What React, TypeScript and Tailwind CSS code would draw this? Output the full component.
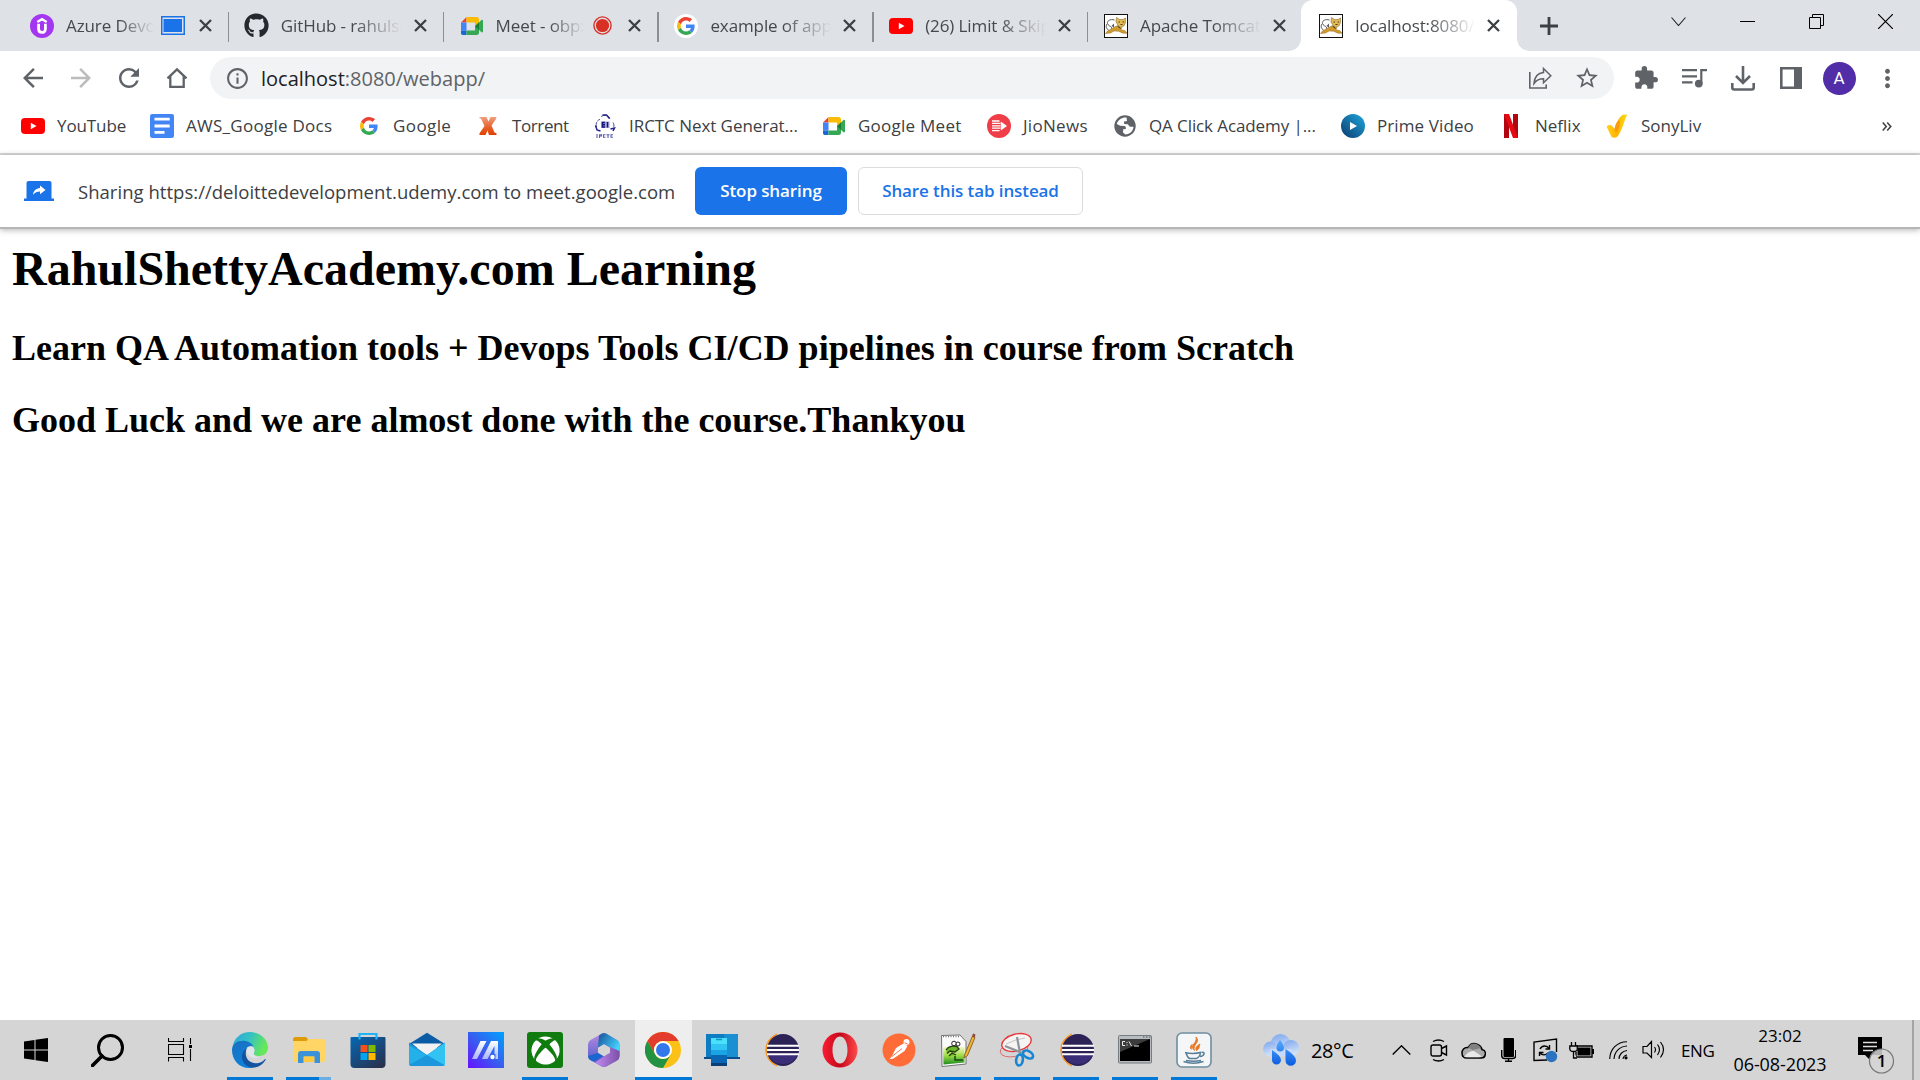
import React from "react";
import { MdArrowBack, MdArrowForward, MdRefresh, MdInfoOutline, MdStarBorder, MdExtension, MdMoreVert } from "react-icons/md";
import { FaXbox, FaGithub } from "react-icons/fa";

/* ---------- favicons (24px box) ---------- */

const GoogleG = ({ s = 18 }: { s?: number }) => (
  <svg width={s} height={s} viewBox="0 0 48 48">
    <path fill="#EA4335" d="M24 9.5c3.54 0 6.71 1.22 9.21 3.6l6.85-6.85C35.9 2.38 30.47 0 24 0 14.62 0 6.51 5.38 2.56 13.22l7.98 6.19C12.43 13.72 17.74 9.5 24 9.5z" />
    <path fill="#4285F4" d="M46.98 24.55c0-1.57-.15-3.09-.38-4.55H24v9.02h12.94c-.58 2.96-2.26 5.48-4.78 7.18l7.73 6c4.51-4.18 7.09-10.36 7.09-17.65z" />
    <path fill="#FBBC05" d="M10.53 28.59c-.48-1.45-.76-2.99-.76-4.59s.27-3.14.76-4.59l-7.98-6.19C.92 16.46 0 20.12 0 24c0 3.88.92 7.54 2.56 10.78l7.97-6.19z" />
    <path fill="#34A853" d="M24 48c6.48 0 11.93-2.13 15.89-5.81l-7.73-6c-2.15 1.45-4.92 2.3-8.16 2.3-6.26 0-11.57-4.22-13.47-9.91l-7.98 6.19C6.51 42.62 14.62 48 24 48z" />
  </svg>
);

const Udemy = () => (
  <svg width="24" height="24" viewBox="0 0 24 24">
    <circle cx="12" cy="12" r="12" fill="#a435f0" />
    <path d="M7.3 8 12 5.200l4.700 2.800" fill="none" stroke="#fff" strokeWidth="2.400" />
    <path d="M8.600 9.800v5.200c0 4.600 6.800 4.600 6.800 0V9.800" fill="none" stroke="#fff" strokeWidth="2.800" />
  </svg>
);

const Meet = () => (
  <svg width="24" height="24" viewBox="0 0 24 24">
    <path fill="#ea4335" d="M1 8.5 6.5 3v5.5z" />
    <path fill="#fbbc04" d="M6.5 3h10A2.5 2.5 0 0 1 19 5.500V9l-4 3.500V8.500H6.500z" />
    <path fill="#4285f4" d="M1 8.500h5.500v8H1z" />
    <path fill="#1967d2" d="M1 16.500h5.500V21H2.800A1.800 1.800 0 0 1 1 19.200z" />
    <path fill="#34a853" d="M6.500 16.500H15V12l4 3v3.500A2.500 2.500 0 0 1 16.500 21h-10z" />
    <path fill="#34a853" d="M15 12.200 21.500 6c.6-.5 1.500-.2 1.500.6v11c0 .8-.9 1.100-1.500.6z" />
    <path fill="#188038" d="M15 12.200 19 8.400v7.400z" />
  </svg>
);

const YouTube = () => (
  <svg width="24" height="24" viewBox="0 0 24 24">
    <rect x="0" y="4" width="24" height="16" rx="4" fill="#f00" />
    <path d="M9.800 8.800v6.400l5.700-3.200z" fill="#fff" />
  </svg>
);

const Tomcat = () => (
  <svg width="24" height="24" viewBox="0 0 24 24">
    <rect x=".5" y=".5" width="23" height="23" fill="#fff" stroke="#111" />
    <path d="M12.500 12 8 14.500 3.500 17 1.500 19.500l5-.5 3.500-2 4.500.2 4.500 2H23l-2-2.500-4-1 .5-2-3.500-1.500z" fill="#d19a2c" stroke="#8d6a25" strokeWidth=".5" />
    <path d="m12.500 3.500 3 2h3.500l2.500-1.500-.2 5-1.500 3-2.800 1.500-2.800-2L12 8z" fill="#e3bb57" stroke="#84682f" strokeWidth=".6" />
    <path d="M14.500 8H16M18.500 8H20M16.500 10.500h2M13.500 12l3 2.500" stroke="#3b2a0a" strokeWidth=".9" />
    <path d="M10.500 6C5 4.500 2 8 4 10.500S8 12 7.500 14.500M3 10c-1.500 2.500-1 4.500 1.500 6" fill="none" stroke="#444" strokeWidth=".9" />
    <path d="m7.500 12 2.500-2.500v4z" fill="#555" />
  </svg>
);

const Docs = () => (
  <svg width="24" height="24" viewBox="0 0 24 24">
    <rect width="24" height="24" rx="2.200" fill="#4285f4" />
    <path d="M4.500 5.200h15.200M4.500 12h15.200M4.500 18.300h10" stroke="#fff" strokeWidth="2.800" />
  </svg>
);

const Torrent = () => (
  <svg width="24" height="24" viewBox="0 0 24 24">
    <defs>
      <linearGradient id="tor" x2="0" y2="1"><stop stopColor="#f0a080" /><stop offset=".55" stopColor="#e8622c" /><stop offset="1" stopColor="#e04000" /></linearGradient>
    </defs>
    <path d="M3.500 3h7l2 4.500L14.500 3H20.500l-.5 2-4.500 6.500L18.500 18.500l2 .8V21h-7.500l-1.500-4.500L9.500 21H3.500v-1.700L8.500 12 5 4.500l-1.500-.3z" fill="url(#tor)" />
  </svg>
);

const Irctc = () => (
  <svg width="24" height="24" viewBox="0 0 24 24">
    <path d="M8 2.500C13 0 16.500 2 16.800 5M3.500 13C2.500 9 4 6.500 7 5.300M20 8.500c1.500 2.500 1.200 4.500-.5 6.500" fill="none" stroke="#23238e" strokeWidth=".8" strokeDasharray="5 1" />
    <path d="M2.500 11.500 4 16l3.500 1M17.500 15l4-1-1.500 3M9.500 1h4l3 3.500" fill="none" stroke="#23238e" strokeWidth="1.500" />
    <rect x="8" y="7.500" width="8.500" height="6.500" fill="#a3a3d4" />
    <path d="M12 8.500H9.500v4.500H12M9.500 10.700H12M14.500 8v5.500" stroke="#15157e" strokeWidth="1.400" fill="none" />
    <path d="M4 20v4M6.500 24v-3.300h2V22H7M12.500 20.700h-2v2.600h2M13.500 20.700h3M15 20.700V24M20 20.700h-2v2.600h2" fill="none" stroke="#5c5cae" strokeWidth="1.100" />
  </svg>
);

const Jio = () => (
  <svg width="24" height="24" viewBox="0 0 24 24">
    <circle cx="12" cy="12" r="12" fill="#f03e48" />
    <path d="M5 7h7.500M5 9.400h8.500M5 11.800h8.500M5 14.200h8.500M5 16.600h7.500" stroke="#fff" strokeWidth="1.300" />
    <path d="M13.800 7.500v9L20 12z" fill="#fff" />
  </svg>
);

const Globe = () => (
  <svg width="24" height="24" viewBox="0 0 24 24">
    <circle cx="12" cy="12" r="10.700" fill="#5f6368" />
    <path d="M13.500 3.600C9 3.300 5 5.800 3.800 10l3.400 1.700 4.300.3c1.300.3 1.500 1.500 1.300 3l-2.600.3-.2 3.300 2.400 1.900C17 20.200 20.200 17 20.500 12.700L17 12.800l-2.300-2.600-3.500-.3-.2-2.300 3-.5z" fill="#fff" />
  </svg>
);

const Prime = () => (
  <svg width="24" height="24" viewBox="0 0 24 24">
    <defs><linearGradient id="prm" x1="1" x2="0" y2="1"><stop stopColor="#1fa8dc" /><stop offset="1" stopColor="#0b3a6e" /></linearGradient></defs>
    <circle cx="12" cy="12" r="12" fill="url(#prm)" />
    <path d="M9 8v8l7-4z" fill="#fff" />
  </svg>
);

const Netflix = () => (
  <svg width="24" height="24" viewBox="0 0 24 24">
    <path d="M5 0h5v24H5zM14 0h5v24h-5z" fill="#b1060f" />
    <path d="M5 0h5l9 24h-5z" fill="#e50914" />
  </svg>
);

const Sony = () => (
  <svg width="24" height="24" viewBox="0 0 24 24">
    <defs><linearGradient id="sny" x2="1"><stop stopColor="#ffd21f" /><stop offset=".5" stopColor="#ffb300" /><stop offset="1" stopColor="#f7e017" /></linearGradient></defs>
    <path d="M1.500 12.500c2-1.500 4-1.800 5.500-.8l2.500 3.300C11 9 14 3 18 .8L22.300.5C19.500 6 17 17 12.500 22.500c-2 1.500-4 1.500-6 .5z" fill="url(#sny)" />
    <path d="M9.500 15c1-4.500 3-8.500 4.500-8.500s1 5-1 9.500-3 2-3.500-1z" fill="#f99b0c" />
  </svg>
);

/* ---------- tab strip ---------- */

const Sharing = () => (
  <svg width="24" height="19" viewBox="0 0 24 19">
    <rect x=".75" y=".75" width="22.500" height="17.500" fill="none" stroke="#1a73e8" strokeWidth="1.500" />
    <rect x="2.500" y="3" width="18.500" height="13" fill="#1a73e8" />
  </svg>
);
const Recording = () => (
  <svg width="19" height="19" viewBox="0 0 19 19">
    <circle cx="9.500" cy="9.500" r="8.600" fill="none" stroke="#d93025" strokeWidth="1.400" />
    <circle cx="9.500" cy="9.500" r="6.600" fill="#d93025" />
  </svg>
);

type TabData = { title: string; icon: React.ReactNode; badge?: React.ReactNode; active?: boolean };
const tabs: TabData[] = [
  { title: "Azure Devops", icon: <Udemy />, badge: <Sharing /> },
  { title: "GitHub - rahulshe", icon: <FaGithub size={25} color="#24292f" className="shrink-0" /> },
  { title: "Meet - obpx", icon: <Meet />, badge: <Recording /> },
  { title: "example of applic", icon: <span className="flex size-6 items-center justify-center rounded-full bg-white"><GoogleG /></span> },
  { title: "(26) Limit & Skip in", icon: <YouTube /> },
  { title: "Apache Tomcat/", icon: <Tomcat /> },
  { title: "localhost:8080/w", icon: <Tomcat />, active: true },
];

const Tab = ({ t, sep }: { t: TabData; sep: boolean }) => (
  <div className={"relative flex h-[51px] shrink-0 items-center " + (t.active ? "-ml-[2px] w-[216px] rounded-t-xl bg-white pl-[18px]" : "w-[214.8px] pl-[15.5px]")}>
    {t.active && (
      <>
        <span className="absolute bottom-0 -left-3 size-3 bg-[radial-gradient(circle_at_0_0,#dee1e6_11.5px,white_12px)]" />
        <span className="absolute bottom-0 -right-3 size-3 bg-[radial-gradient(circle_at_100%_0,#dee1e6_11.5px,white_12px)]" />
      </>
    )}
    <span className="flex size-6 shrink-0 items-center justify-center">{t.icon}</span>
    <span className={"ml-3 overflow-hidden whitespace-nowrap text-[17px] tracking-[-0.1px] leading-6 text-[#45494d] mask-r-from-60% mask-r-to-100% " + (t.badge ? "w-[88px]" : "w-[121px]")}>{t.title}</span>
    {t.badge && <span className="ml-[7px] flex w-6 shrink-0 justify-center">{t.badge}</span>}
    <svg className="absolute right-[17.5px] top-[19px]" width="13" height="13" viewBox="0 0 13 13"><path d="m1 1 11 11M12 1 1 12" stroke="#3c4043" strokeWidth="2.300" /></svg>
    {sep && <span className="absolute right-0 top-3 h-[30px] w-[1.500px] bg-[#8c8f94]" />}
  </div>
);

/* ---------- bookmarks ---------- */

const bookmarks: { n: string; w: string; icon: React.ReactNode }[] = [
  { n: "YouTube", w: "w-[129px] tracking-[-0.1px]", icon: <YouTube /> },
  { n: "AWS_Google Docs", w: "w-[207px] tracking-[0.27px]", icon: <Docs /> },
  { n: "Google", w: "w-[119px] tracking-[0.4px]", icon: <GoogleG /> },
  { n: "Torrent", w: "w-[117px] tracking-[-0.4px]", icon: <Torrent /> },
  { n: "IRCTC Next Generat...", w: "w-[229px] tracking-[-0.05px]", icon: <Irctc /> },
  { n: "Google Meet", w: "w-[165px] tracking-[0.25px]", icon: <Meet /> },
  { n: "JioNews", w: "w-[126px] tracking-[0.3px]", icon: <Jio /> },
  { n: "QA Click Academy |...", w: "w-[228px] tracking-[-0.1px]", icon: <Globe /> },
  { n: "Prime Video", w: "w-[158px] tracking-[0.1px]", icon: <Prime /> },
  { n: "Neflix", w: "w-[106px]", icon: <Netflix /> },
  { n: "SonyLiv", w: "w-[110px]", icon: <Sony /> },
];

/* ---------- taskbar app icons (36px box) ---------- */

const S = ({ children }: { children: React.ReactNode }) => <svg width="36" height="36" viewBox="0 0 36 36">{children}</svg>;

const Edge = () => (
  <S>
    <defs>
      <linearGradient id="e1" x1="0" x2="1" y2=".3"><stop stopColor="#2aa5dc" /><stop offset=".5" stopColor="#35c1c5" /><stop offset="1" stopColor="#66e858" /></linearGradient>
      <linearGradient id="e2" x1="0" x2=".6" y1="0" y2="1"><stop stopColor="#1b6fbf" /><stop offset="1" stopColor="#0a84dd" /></linearGradient>
    </defs>
    <path d="M.5 15C2 6 9 0 18 0c10 0 18 7 18 15.500 0 5-4 8.500-8.500 8.500-4 0-6-1.500-5.500-3 1-2 .8-5-1.500-6.700C14 9 4 9 .5 15z" fill="url(#e1)" />
    <path d="M0 18C0 12 5.500 8.800 11 8.800c5 0 9 2.700 10.500 5.800-4-2-8.500 1-8.500 6.500 0 7 5 12 13 11.500-2.500 2.300-5.500 3.400-9 3.400C7 36 0 28 0 18z" fill="url(#e2)" />
    <path d="M15.500 15.800c-3 4-2.500 11.500 4 14.500 5 2 10 1 13.500-3.300 1-.3.800.6.3 1.300C31 32.500 26 36 19.500 35.800 12.500 34 9.500 28.500 10 24c.3-3.500 2.500-6.800 5.500-8.200z" fill="#1353a0" />
    <path d="M14.500 18c.3-3 5.500-4.800 7.500-1.500 1 2-.5 4-.3 5.500.3 1.800 2.300 3 5.300 3.200-5 2-13-1-12.500-7.200z" fill="#dfe6ea" />
  </S>
);
const Explorer = () => (
  <S>
    <path d="M2 7.500Q2 5 4 5h11l2 2.500v6H2z" fill="#dd9c05" />
    <path d="M2 9h13.500l2-2H32q2 0 2 2v19q0 2-2 2H4q-2 0-2-2z" fill="#ffd665" />
    <path d="M7 30V22q0-3 3-3h16q3 0 3 3v9h-5.500v-6.500h-11V31H7z" fill="#3b92d8" />
    <path d="M13 24.500h10V30H13z" fill="#ffc93f" />
  </S>
);
const Store = () => (
  <S>
    <defs><linearGradient id="st" x2=".8" y2="1"><stop stopColor="#0468b5" /><stop offset="1" stopColor="#283250" /></linearGradient></defs>
    <path d="M.5 6q0-1 1-1h33q1 0 1 1v26q0 4-4 4h-27q-4 0-4-4z" fill="url(#st)" />
    <path d="M9.500 7.500V2h17v5.500" fill="none" stroke="#22b3f5" strokeWidth="2.200" />
    <path d="M10.500 13h7v7h-7z" fill="#f25022" /><path d="M18.500 13h7v7h-7z" fill="#7fba00" />
    <path d="M10.500 21h7v7h-7z" fill="#00a4ef" /><path d="M18.500 21h7v7h-7z" fill="#ffb900" />
  </S>
);
const Mail = () => (
  <S>
    <path d="M0 12 18 .800 36 12v4H0z" fill="#0b5ca5" />
    <path d="M3 11.500h30L18 24z" fill="#f2f2f2" />
    <path d="M0 10.500 18 23 36 10.500V32q0 2-2 2H2q-2 0-2-2z" fill="#1c96dc" />
    <path d="M36 10.500 18 23l18 10.500z" fill="#32c3f3" />
    <path d="M0 10.500v3L18 23 0 33z" fill="#24b0e8" />
  </S>
);
const MyAsus = () => (
  <S>
    <defs>
      <linearGradient id="ma" x1="1" x2="0" y2="1"><stop stopColor="#00a2ff" /><stop offset=".5" stopColor="#3660ef" /><stop offset="1" stopColor="#6810ff" /></linearGradient>
      <linearGradient id="mb" x2="0" y2="1"><stop stopColor="#fff" /><stop offset="1" stopColor="#a9b8fa" /></linearGradient>
    </defs>
    <path d="M0 0h36v36H0z" fill="url(#ma)" />
    <path d="M12.500 9h6L9 27H4zM23 9h7v13h-3.500v-8l-7 13h-5.500z" fill="url(#mb)" />
    <circle cx="24.500" cy="25" r="2.200" fill="#fff" /><path d="M27.500 22H30v5h-2.500z" fill="#b8c8fb" />
  </S>
);
const Xbox = () => <span className="flex size-9 items-center justify-center rounded-[3px] bg-[#107c10]"><FaXbox size={29} color="#fff" /></span>;
const M365 = () => (
  <S>
    <defs>
      <linearGradient id="o1" x2="0" y2="1"><stop stopColor="#b98be0" /><stop offset="1" stopColor="#3f55c8" /></linearGradient>
      <linearGradient id="o2" x2="1" y2=".6"><stop stopColor="#174f9a" /><stop offset="1" stopColor="#45d2fb" /></linearGradient>
      <linearGradient id="o3" x2="1"><stop stopColor="#c58af2" /><stop offset="1" stopColor="#7a50a8" /></linearGradient>
    </defs>
    <path fillRule="evenodd" d="M16 1.500q2-1 4 0l11 6.500q2.500 1.500 2.500 4v12q0 3-2.500 4.500l-11 6q-2 1-4 0L5 28.500Q2 27 2 24V12.500q0-3 2.500-4.500zM18 12l-6 3.500v5.500l6 3.500 6-3.500v-5.500z" fill="url(#o1)" />
    <path d="M13 3.500 16 1.500q2-1 4 0l11 6.500q2.500 1.500 2.500 4V20L24 21v-5.500L18 12l-6 3.500z" fill="url(#o2)" />
    <path d="M33.500 19v5q0 3-2.500 4.500l-11 6q-2 1-4 0l-7-4 9-6 6-3.500V15z" fill="url(#o3)" />
    <path d="M2 24q1 4.500 5 5l3.500-1L17 24l-5-3z" fill="#1a66cf" />
  </S>
);
const Chrome = () => (
  <S>
    <circle cx="18" cy="18" r="18" fill="#fbc116" />
    <path d="M2.400 9A18 18 0 0 1 33.600 9H18a9 9 0 0 0-7.800 13.500z" fill="#e33b2e" />
    <path d="M2.400 9A18 18 0 0 0 18 36l7.800-13.500a9 9 0 0 1-15.600 0z" fill="#229342" />
    <circle cx="18" cy="18" r="9" fill="#fff" /><circle cx="18" cy="18" r="7" fill="#3378ea" />
  </S>
);
const Phone = () => (
  <S>
    <path d="M2 2h32v24H2z" fill="#0e7cc0" /><path d="M20 2h12q2 0 2 2v21H23z" fill="#1a8fd2" />
    <path d="M0 25h36v2H0z" fill="#0a4f8c" />
    <path d="M7 6h16v28H7z" fill="#0a65b2" /><path d="M7 6h16v17H7z" fill="#1ba4e4" /><path d="M7 6h16v6H7z" fill="#48e0fa" /><path d="M7 12h16v6H7z" fill="#31c3f2" />
    <path d="M12 7.500h6" stroke="#1291c7" strokeWidth="1.500" /><path d="M7 31h16v3H7z" fill="#0b3f7a" />
  </S>
);
const Eclipse = () => (
  <S>
    <path d="M14 2A17 17 0 0 0 14 34C3 26 3 10 14 2z" fill="#f7941e" stroke="#f7941e" />
    <circle cx="20" cy="18" r="16" fill="#2c2255" />
    <path d="M5 22h30q-4 10-15 10T5 22z" fill="#3b2e78" />
    <path d="M4 13.700h32M4 18h32M4 22.300h32" stroke="#fff" strokeWidth="1.900" />
  </S>
);
const Opera = () => (
  <S>
    <defs><linearGradient id="op" x2="1"><stop stopColor="#fa1e32" /><stop offset=".5" stopColor="#c5071c" /><stop offset="1" stopColor="#ff4b4b" /></linearGradient></defs>
    <path fillRule="evenodd" d="M18 .500a17.500 17.500 0 1 0 0 35 17.500 17.500 0 1 0 0-35zM18 4.500c4.500 0 7.500 6 7.500 13.500S22.500 31.500 18 31.500 10.500 25.500 10.500 18 13.500 4.500 18 4.500z" fill="url(#op)" />
  </S>
);
const Postman = () => (
  <S>
    <circle cx="18" cy="18" r="16.500" fill="#ff6c37" />
    <circle cx="25.500" cy="10" r="3" fill="#fff" />
    <path d="m22.500 11.500 4 2.500-3 5-11 7.500-4 .8 2.500-3.300 4-8z" fill="#fff" />
    <path d="m11 24.500 10-8M23.500 10.800l3 1" stroke="#ff6c37" strokeWidth=".9" />
  </S>
);
const Notepad = () => (
  <S>
    <defs><linearGradient id="np" x2="0" y2="1"><stop stopColor="#f4f8c8" /><stop offset=".5" stopColor="#9bdb45" /><stop offset="1" stopColor="#1c8b20" /></linearGradient></defs>
    <path d="M1.500 3.500 20 3l6 6.500V32L2 34.500z" fill="#fafafa" stroke="#555" strokeWidth=".8" />
    <path d="M3 15h21.500v15.500L3.500 32.500z" fill="url(#np)" />
    <path d="M3 4.500h16" stroke="#777" strokeDasharray="1 1.500" strokeWidth="1.500" />
    <path d="M6 18c2-3 6-4.500 11-3.500l2 2.500-4 3-5-1-3 2.500M9 24l3-3 4 2" stroke="#253f10" strokeWidth="1.300" fill="#6bb82b" />
    <circle cx="14" cy="11.500" r="2.300" fill="#fff" stroke="#222" /><circle cx="18" cy="12" r="2" fill="#fff" stroke="#222" />
    <path d="M15 24v4h8" stroke="#134b12" strokeWidth="1.500" fill="none" />
    <path d="m24.500 23 8-19 2.500 1.500-7.500 18-3.500 2.500z" fill="#f5b52a" stroke="#754f1d" strokeWidth=".8" />
    <path d="m32 4.500 1-3 2.500 1-.8 3.300z" fill="#8e4a3c" />
  </S>
);
const Snip = () => (
  <S>
    <ellipse cx="15" cy="17.500" rx="14" ry="7" transform="rotate(-12 15 17.500)" fill="none" stroke="#e05a5a" strokeWidth=".8" />
    <ellipse cx="17.500" cy="10.500" rx="15" ry="8.500" transform="rotate(-14 17.500 10.500)" fill="#f6f3f3" stroke="#e8383b" strokeWidth="1.400" />
    <path d="M7 12q10-5 19-6" stroke="#c3c3c3" fill="none" />
    <path d="m18 5 3 16 1.500-1M6 14l16 6.500" stroke="#8e969c" strokeWidth="2.200" fill="none" />
    <ellipse cx="20.500" cy="28" rx="3.300" ry="5.500" transform="rotate(8 20.500 28)" fill="none" stroke="#1586d4" strokeWidth="2.600" />
    <ellipse cx="29" cy="22.500" rx="5.500" ry="3.300" transform="rotate(30 29 22.500)" fill="none" stroke="#1586d4" strokeWidth="2.600" />
  </S>
);
const Cmd = () => (
  <S>
    <rect x="1.500" y="3.500" width="33" height="27.500" rx="1" fill="#b8bcc0" stroke="#777c80" />
    <path d="M3 7h30v22H3z" fill="#000" /><path d="M3 7h30L3 20z" fill="#3c3c3c" />
    <path d="M8 9.500H5.500v4H8M10 10v1M10 12.500v1M12 9.500l2.500 4.500M17 14h5" stroke="#eee" fill="none" />
    <path d="M26 5h1.500M29 5h1.500M32 5h1.500" stroke="#456" strokeWidth="1.200" />
  </S>
);
const Java = () => (
  <S>
    <rect x="1" y="1" width="34" height="34" rx="5" fill="#f5f6f7" stroke="#6f8da0" strokeWidth="1.600" />
    <path d="M18.500 18.500c-6-5 3.500-7.500 1.500-13.500 5 5.500-4 7.500-1.500 13.500zM20.500 18.500c-2-3 1-5 3.500-6.500-1.500 3 .5 4-3.500 6.500zM15.500 17.500c-2.500-2-.5-4 1-5.500" fill="#e87722" stroke="#e87722" strokeWidth=".9" />
    <path d="M9 20.500q8 2 16.500-.2M10 20.500q1 4.500 3.500 6h7q3.500-1.500 4-6M26 20.500c3.500-1 2.500 3.500-2 4M7.500 29.500q10 3.500 20 0M10 28.500q8 1.500 15 0" fill="none" stroke="#5a8099" strokeWidth="1.500" />
  </S>
);

const apps: { icon: React.ReactNode; on?: boolean; active?: boolean; stacked?: boolean }[] = [
  { icon: <Edge />, on: true }, { icon: <Explorer />, on: true, stacked: true }, { icon: <Store /> }, { icon: <Mail /> }, { icon: <MyAsus /> },
  { icon: <Xbox />, on: true }, { icon: <M365 /> }, { icon: <Chrome />, active: true }, { icon: <Phone /> }, { icon: <Eclipse /> }, { icon: <Opera /> },
  { icon: <Postman /> }, { icon: <Notepad />, on: true }, { icon: <Snip />, on: true }, { icon: <Eclipse />, on: true }, { icon: <Cmd />, on: true }, { icon: <Java />, on: true },
];

const Weather = () => (
  <svg width="36" height="34" viewBox="0 0 36 34">
    <defs>
      <linearGradient id="cl" x2=".3" y2="1"><stop stopColor="#7ba6ec" /><stop offset="1" stopColor="#d5e3f9" /></linearGradient>
      <linearGradient id="dr" x2="0" y2="1"><stop stopColor="#54aaff" /><stop offset="1" stopColor="#0b5be0" /></linearGradient>
    </defs>
    <circle cx="17.500" cy="11" r="10" fill="url(#cl)" /><circle cx="7.500" cy="16" r="7.500" fill="url(#cl)" /><circle cx="28" cy="15" r="8" fill="url(#cl)" />
    <path d="M7 16h22v7H7z" fill="#c8daf7" />
    <path d="M17 7q4 5 4 7.800a3.700 3.700 0 0 1-7.500 0Q13.500 11 17 7zM9 17q9 6 9 10a4.500 4.500 0 0 1-9 0zM22.500 16q10.500 6.500 10.500 11.500a5.200 5.200 0 0 1-10.500 0z" fill="url(#dr)" />
  </svg>
);

const stroke = { fill: "none", stroke: "#000", strokeWidth: 1.4 };

const Home = () => (
  <svg width="22" height="22" viewBox="0 0 22 22"><path d="M1.500 11.300 11 2.300l9.500 9M4.300 9v10.800h13.400V9" fill="none" stroke="#5f6368" strokeWidth="2.300" /></svg>
);

export default function App() {
  return (
    <div className="flex h-[1080px] w-[1920px] flex-col overflow-hidden bg-white font-['Open_Sans',sans-serif]">
      <header className="flex h-[51px] shrink-0 bg-[#dee1e6] pl-[14.5px]">
        {tabs.map((t, i) => <Tab key={t.title} t={t} sep={i < 5} />)}
        <div className="flex w-16 items-center justify-center">
          <svg width="18" height="18" viewBox="0 0 18 18"><path d="M9 0v18M0 9h18" stroke="#3c4043" strokeWidth="2.800" /></svg>
        </div>
        <div className="ml-auto flex h-[43px] items-center">
          <span className="flex w-[69px] justify-center"><svg width="15" height="9" viewBox="0 0 15 9"><path d="m.5.500 7 8 7-8" fill="none" stroke="#222" strokeWidth="1.100" /></svg></span>
          <span className="flex w-[69px] justify-center"><span className="h-px w-[15px] bg-black" /></span>
          <span className="flex w-[69px] justify-center"><svg width="15" height="15" viewBox="0 0 15 15"><path d="M.5 3.500h11v11H.5zM3.500 3.500V.500h11v11h-3" fill="none" stroke="#000" /></svg></span>
          <span className="flex w-[69px] justify-center"><svg width="15" height="15" viewBox="0 0 15 15"><path d="m0 0 15 15M15 0 0 15" stroke="#000" strokeWidth="1.200" /></svg></span>
        </div>
      </header>

      <div className="flex h-[54px] shrink-0 items-center text-[#5f6368]">
        <div className="flex h-full w-[210px] items-center pl-[9px]">
          <span className="flex w-12 justify-center"><MdArrowBack size={30} /></span>
          <span className="flex w-12 justify-center text-[#babcbe]"><MdArrowForward size={30} /></span>
          <span className="flex w-12 justify-center"><MdRefresh size={30} /></span>
          <span className="flex w-12 justify-center"><Home /></span>
        </div>
        <div className="flex h-[42px] w-[1404px] items-center rounded-full bg-[#f1f3f4] pl-[15px]">
          <MdInfoOutline size={25} />
          <span className="ml-[11px] whitespace-nowrap pt-[2px] text-[20px] leading-7"><span className="text-[#202124]">localhost</span>:8080/webapp/</span>
          <svg className="ml-auto" width="24" height="24" viewBox="0 0 24 24"><path d="M1.800 6v16h16.400v-3.500" fill="none" stroke="#5f6368" strokeWidth="1.600" /><path d="M15.500 2.500v4C9 7 6.500 11 6 17.500 8.500 14 11 12.800 15.500 12.800v4L22.800 9.700z" fill="none" stroke="#5f6368" strokeWidth="1.500" /></svg>
          <MdStarBorder size={26} className="ml-[22px] mr-[14px]" />
        </div>
        <div className="flex w-[306px] items-center pl-[8px]">
          <span className="flex w-12 justify-center"><MdExtension size={26} /></span>
          <span className="flex w-12 justify-center"><svg width="25" height="20" viewBox="0 0 25 20"><path d="M0 2.200h15M0 8.300h15M0 14.400h10.500M19.300 15.500V2.200H25" fill="none" stroke="#5f6368" strokeWidth="2.200" /><circle cx="16.800" cy="15.600" r="3.900" fill="#5f6368" /></svg></span>
          <span className="flex w-[49px] justify-center"><svg width="24" height="25" viewBox="0 0 24 25"><path d="M12 0v16M5 10l7 7 7-7" fill="none" stroke="#5f6368" strokeWidth="2.600" /><path d="M1.300 17v4.500q0 2 2 2h17.400q2 0 2-2V17" fill="none" stroke="#5f6368" strokeWidth="2.600" /></svg></span>
          <span className="flex w-12 justify-center"><svg width="22" height="22" viewBox="0 0 22 22"><path d="M1.300 1.300h19.400v19.400H1.300z" fill="none" stroke="#5f6368" strokeWidth="2.600" /><path d="M14 1h7v20h-7z" fill="#5f6368" /></svg></span>
          <span className="flex w-12 justify-center"><span className="flex size-[33px] items-center justify-center rounded-full bg-[#512da8] pt-px font-[Roboto] text-[17px] text-white">A</span></span>
          <span className="flex w-12 justify-center"><MdMoreVert size={29} /></span>
        </div>
      </div>

      <nav className="flex h-[50px] shrink-0 items-start border-b-2 border-[#d9d9d9] pl-[21px] pt-[9px] text-[17px] leading-6 text-[#3c4043]">
        {bookmarks.map((b) => (
          <span key={b.n} className={"flex shrink-0 items-center gap-3 whitespace-nowrap " + b.w}>
            <span className="flex size-6 shrink-0 items-center justify-center">{b.icon}</span>{b.n}
          </span>
        ))}
        <svg className="ml-auto mr-7 mt-2" width="10" height="9" viewBox="0 0 10 9"><path d="m.7.500 3.600 4-3.600 4M5.200.500l3.600 4-3.600 4" fill="none" stroke="#3c4043" strokeWidth="1.500" /></svg>
      </nav>

      <div className="relative flex h-[74px] shrink-0 items-center border-b-2 border-[#b5b5b5] pl-6 shadow-[0_1px_6px_rgba(0,0,0,0.3)]">
        <svg width="30" height="20" viewBox="0 0 30 20"><path d="M4.500 0h21q2 0 2 2v15.500H30V20H0v-2.500h2.500V2q0-2 2-2z" fill="#1a73e8" /><path d="M16 4.500 21.500 9 16 13.200v-2.700c-3 0-5 .8-7 3.200.5-4 3-6.300 7-6.700z" fill="#fff" /></svg>
        <span className="ml-6 w-[617px] whitespace-nowrap pt-[2px] text-[18.5px] tracking-[0.03px] text-[#3c4043]">Sharing https://deloittedevelopment.udemy.com to meet.google.com</span>
        <button className="h-12 w-[152px] rounded-md bg-[#1a73e8] text-[17px] font-semibold tracking-[-0.1px] text-white">Stop sharing</button>
        <button className="ml-[11px] h-12 w-[225px] rounded-md border border-[#dadce0] text-[17px] font-semibold tracking-[-0.1px] text-[#1a73e8]">Share this tab instead</button>
      </div>

      <main className="flex-1 px-3 pt-[13px] font-['Liberation_Serif',serif] font-bold text-black">
        <h1 className="text-[48px] leading-[54px]">RahulShettyAcademy.com Learning</h1>
        <h2 className="mt-8 text-[36px] leading-[41px]">Learn QA Automation tools + Devops Tools CI/CD pipelines in course from Scratch</h2>
        <h2 className="mt-[31px] text-[36px] leading-[41px]">Good Luck and we are almost done with the course.Thankyou</h2>
      </main>

      <footer className="flex h-[60px] shrink-0 items-center bg-[#d5d5d6] text-black">
        <div className="flex w-[220.5px] items-center pl-6">
          <svg width="24" height="24" viewBox="0 0 24 24"><path d="M0 3.500 10.500 2v9.500H0zM11.500 1.800 24 0v11.500H11.500zM0 12.500h10.500V22L0 20.500zM11.500 12.500H24V24l-12.500-1.800z" /></svg>
          <svg className="ml-[43px]" width="33" height="33" viewBox="0 0 33 33"><circle cx="19.500" cy="13.500" r="12" fill="none" stroke="#000" strokeWidth="3" /><path d="M11 22 1.500 31.500" stroke="#000" strokeWidth="3.600" strokeLinecap="round" /></svg>
          <svg className="ml-11" width="24" height="24" viewBox="0 0 24 24"><path d="M.5 0v3.500h15V0M.5 6.500h15v10H.5zM.5 23.500v-4h15v4M22.500 0v6M22.500 11v12" fill="none" stroke="#000" strokeWidth="1.100" /><path d="M21 7h3v3h-3z" /></svg>
        </div>
        <div className="flex h-full">
          {apps.map((a, i) => (
            <span key={i} className="flex w-[59px] justify-center">
              <span className={"relative flex h-full items-center justify-center " + (a.active ? "w-[57px] bg-[#eeeeee]" : "w-[46px]")}>
                {a.icon}
                {(a.on || a.active) && <span className={"absolute bottom-0 left-0 h-[3px] bg-[#0078d7] " + (a.stacked ? "w-[33px]" : "w-full")} />}
                {a.stacked && <span className="absolute bottom-0 left-[33px] h-[3px] w-3 bg-[#69aee5]" />}
              </span>
            </span>
          ))}
        </div>
        <div className="ml-[39.5px] flex items-center"><Weather /><span className="ml-3 w-[80px] whitespace-nowrap pt-px text-[20px] tracking-[-0.4px]">28°C</span></div>
        <div className="flex items-center">
          <svg className="ml-px" width="19" height="10" viewBox="0 0 19 10"><path d="m.7 9.500 8.800-8.700 8.800 8.700" {...stroke} /></svg>
          <svg className="ml-[19px]" width="18" height="23" viewBox="0 0 18 23"><path d="M3 2.500q5.500-3 11 0M3 20.500q5.500 3 11 0M11.500 9.500 16.500 7v9l-5-2.500" {...stroke} /><rect x="1" y="6" width="10.500" height="11" rx="2" {...stroke} /></svg>
          <svg className="ml-[13px]" width="25" height="17" viewBox="0 0 25 17"><path d="M6 16h14a4.300 4.300 0 0 0 1-8.500C20 3 14 0 9.500 2.500L7 5.500C3 5 1 8 1 11c0 3 2 5 5 5z" fill="#aaa" stroke="#000" strokeWidth="1.500" /><path d="m7 5.500 5 2.500 8-2C18 2 13 0 9.500 2.500z" fill="#808080" /><path d="M3 15q5-7 10-6l8 5.500-3 .8H6z" fill="#e8e8e8" /></svg>
          <svg className="ml-[15px]" width="15" height="24" viewBox="0 0 15 24"><rect x="2.500" y="0" width="10.500" height="19" rx="1" /><path d="M.7 12v5.500q0 3 3 3h8q3 0 3-3V12M7.500 20.500V23M4 23.300h7" {...stroke} /></svg>
          <svg className="ml-[17px]" width="25" height="25" viewBox="0 0 25 25"><path d="M14 22 1 22.500V4L23.500 1v13" {...stroke} /><path d="M7 11c2-4 7-4 9-.5M16.500 7v4h-4M15 15c-2 2.500-6 2.500-8 0M6.500 18v-3.500h4" {...stroke} /><circle cx="18.500" cy="18.500" r="5.700" fill="#2d72c0" /></svg>
          <svg className="ml-[11px]" width="25" height="17" viewBox="0 0 25 17"><path d="M6 4h17v11H7v-5" {...stroke} /><path d="M8.500 5.500h13v8h-13zM23 7h2v5h-2z" /><path d="M2.500 0v4M6.500 0v4M.8 4h7.500v3q0 2.500-3.700 2.500T.8 7zM4.500 9.500V16H8" fill="#d5d5d6" stroke="#000" strokeWidth="1.300" /></svg>
          <svg className="ml-[15px]" width="20" height="19" viewBox="0 0 20 19"><path d="M.7 18C1 8 8 1 18 .8M5 18C5.500 10.500 10.500 5.500 18 5M10 18c0-4.500 3.500-8 8-8.500M14 18q.5-3.500 4-4" {...stroke} strokeWidth={1.100} /><circle cx="17" cy="16.800" r="1.600" /></svg>
          <svg className="ml-[13px]" width="24" height="20" viewBox="0 0 24 20"><path d="M1 6.500h4L9.500 1.500v16L5 13H1zM12.500 7q2 2.500 0 5.500M15.500 4.500q4 5 0 10.500M18.500 2q6 7.500 0 15.500" {...stroke} strokeWidth={1.200} /></svg>
          <span className="ml-[15px] w-[36px] pt-px text-[17px] tracking-[-0.4px]">ENG</span>
        </div>
        <div className="ml-[13px] flex w-[100px] flex-col text-center leading-7"><span className="text-[17px]">23:02</span><span className="whitespace-nowrap text-[18px] tracking-[-0.1px]">06-08-2023</span></div>
        <svg className="ml-auto mr-[17px] mt-3" width="37" height="38" viewBox="0 0 37 38"><path d="M0 0h24v18H12v5l-5-5H0z" /><path d="M5 5.500h14M5 9.500h14M5 13.500h10" stroke="#ddd" strokeWidth="1.300" /><circle cx="23.500" cy="24" r="12" fill="#d5d5d6" fillOpacity=".85" stroke="#777" strokeWidth="1.200" /><text x="23.500" y="30" textAnchor="middle" fontSize="17" fontWeight="600" fontFamily="Open Sans">1</text></svg>
        <span className="h-full w-2 border-l-2 border-[#a4a4a6]" />
      </footer>
    </div>
  );
}
